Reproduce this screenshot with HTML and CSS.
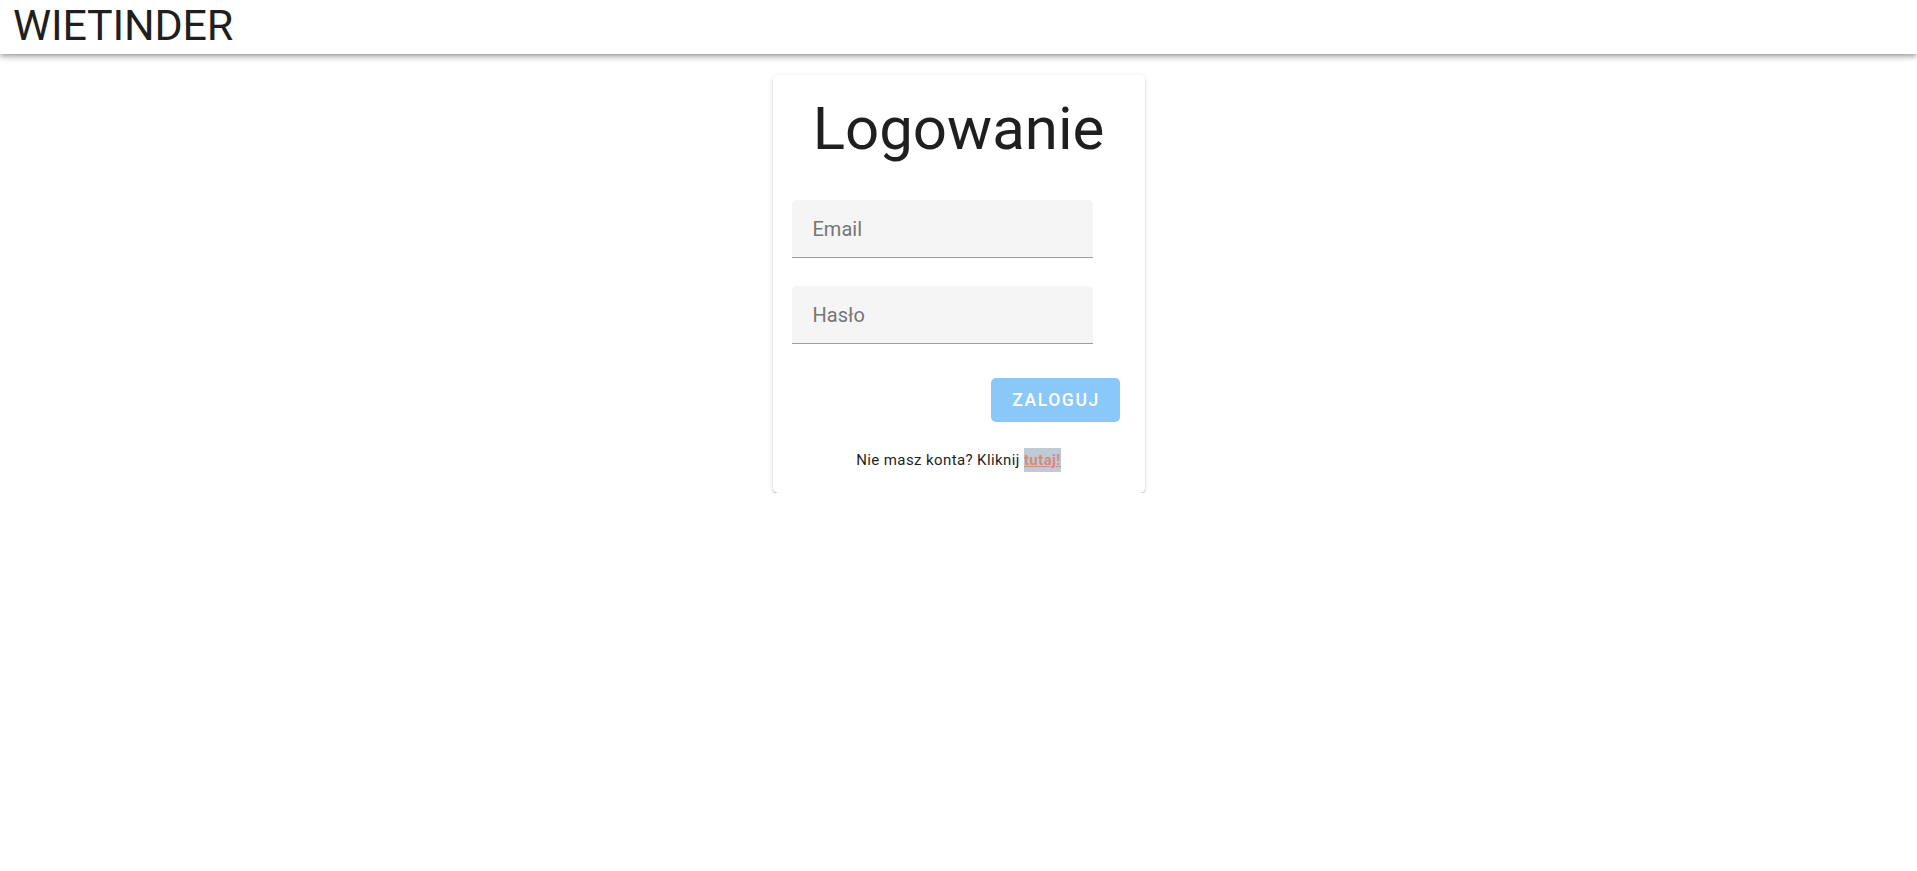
FILE: index.html
```html
<!DOCTYPE html>
<html lang="pl">
<head>
<meta charset="utf-8">
<title>WIETINDER</title>
<link rel="stylesheet" href="styles.css">
</head>
<body>
<header class="app-bar">
  <div class="brand">WIETINDER</div>
</header>
<main class="page">
  <section class="card">
    <h1 class="card-title">Logowanie</h1>
    <form class="form">
      <div class="field"><span class="field-label">Email</span></div>
      <div class="field"><span class="field-label">Hasło</span></div>
      <div class="actions"><button type="button" class="btn">ZALOGUJ</button></div>
    </form>
    <p class="footer-text">Nie masz konta? Kliknij <a class="link" href="#">tutaj!</a></p>
  </section>
</main>
</body>
</html>
```

FILE: styles.css
```css
* { box-sizing: border-box; }
html, body { margin: 0; padding: 0; background: #ffffff; }
body {
  font-family: Roboto, "Liberation Sans", Arial, sans-serif;
  color: rgba(0, 0, 0, 0.87);
}
.app-bar {
  height: 54px;
  background: #ffffff;
  box-shadow: 0 2px 4px -1px rgba(0,0,0,0.25), 0 4px 5px 0 rgba(0,0,0,0.14), 0 1px 10px 0 rgba(0,0,0,0.10);
  padding: 0 0 0 13px;
  position: relative;
  z-index: 2;
}
.brand {
  font-size: 43px;
  line-height: 50px;
  font-weight: 400;
  color: #1f1f1f;
  letter-spacing: -0.2px;
}
.page {
  display: flex;
  justify-content: center;
  padding-top: 21px;
}
.card {
  width: 372px;
  background: #ffffff;
  border-radius: 5px;
  box-shadow: 0 3px 1px -2px rgba(0,0,0,0.2), 0 2px 2px 0 rgba(0,0,0,0.14), 0 1px 5px 0 rgba(0,0,0,0.12);
  padding: 23px 25px 21px 19px;
  display: flex;
  flex-direction: column;
}
.card-title {
  margin: 0;
  text-align: center;
  font-size: 60px;
  line-height: 61px;
  font-weight: 400;
  color: #1f1f1f;
  padding-left: 6px;
}
.form {
  margin-top: 41px;
  display: flex;
  flex-direction: column;
}
.field {
  width: 301px;
  height: 58px;
  background: #f5f5f5;
  border-radius: 5px 5px 0 0;
  border-bottom: 1px solid #9e9e9e;
  padding: 17px 0 0 21px;
  margin-bottom: 28px;
}
.field-label {
  display: block;
  font-size: 20px;
  line-height: 24px;
  color: #757575;
}
.actions {
  display: flex;
  justify-content: flex-end;
  margin-top: 6px;
}
.btn {
  width: 129px;
  height: 44px;
  border: none;
  border-radius: 5px;
  background: #8ac8f9;
  color: #ffffff;
  font-family: Roboto, "Liberation Sans", Arial, sans-serif;
  font-size: 17.5px;
  font-weight: 500;
  letter-spacing: 1.6px;
  padding: 0 0 0 2px;
}
.footer-text {
  margin: 26px 0 0 0;
  text-align: center;
  font-size: 15px;
  line-height: 24px;
  color: #1f1f1f;
  padding-left: 6px;
  letter-spacing: 0.4px;
}
.link {
  display: inline-block;
  background: #c0cad6;
  color: #d08c7e;
  font-weight: 700;
  text-decoration: underline;
}
```
